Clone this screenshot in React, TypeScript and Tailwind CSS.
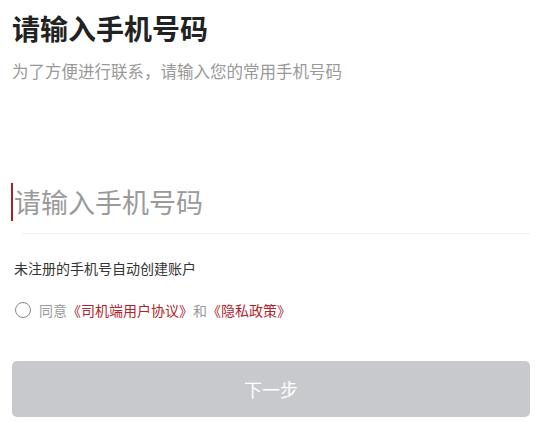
import React from 'react';

const App = () => {
  return (
    <div className="w-[543px] h-[422px] bg-white font-['Noto_Sans_CJK_SC',sans-serif] overflow-hidden">
      {/* Header */}
      <div className="px-3 pt-[9px]">
        <h1 className="text-[28px] leading-[38px] font-bold text-[#222]">请输入手机号码</h1>
        <p className="mt-[13px] text-[16.5px] leading-[22px] text-[#999]">为了方便进行联系，请输入您的常用手机号码</p>
      </div>

      {/* Phone input */}
      <div className="mt-[100px] pl-[11px] flex items-center h-[40px]">
        <div className="w-[2px] h-[38px] bg-[#a3212b]" />
        <span className="ml-[1px] text-[27px] leading-[38px] text-[#9a9a9a]">请输入手机号码</span>
      </div>
      <div className="mt-[11px] ml-[22px] mr-[13px] h-px bg-[#eeeeee]" />

      <p className="mt-[25px] pl-[14px] text-[14px] leading-[18px] text-[#333]">未注册的手机号自动创建账户</p>

      {/* Agreement */}
      <div className="mt-[23px] pl-[15px] flex items-center text-[14px] leading-[20px]">
        <span className="w-[16px] h-[16px] rounded-full border border-[#888] box-border" />
        <span className="ml-[8px] text-[#999]">同意</span>
        <span className="text-[#b0232c]">《司机端用户协议》</span>
        <span className="text-[#999]">和</span>
        <span className="text-[#b0232c]">《隐私政策》</span>
      </div>

      {/* Next button */}
      <div className="mt-[41px] px-3">
        <button className="w-[518px] h-[56px] rounded-[5px] bg-[#c8c9cc] text-white text-[18px] flex items-center justify-center">
          下一步
        </button>
      </div>
    </div>
  );
};

export default App;
